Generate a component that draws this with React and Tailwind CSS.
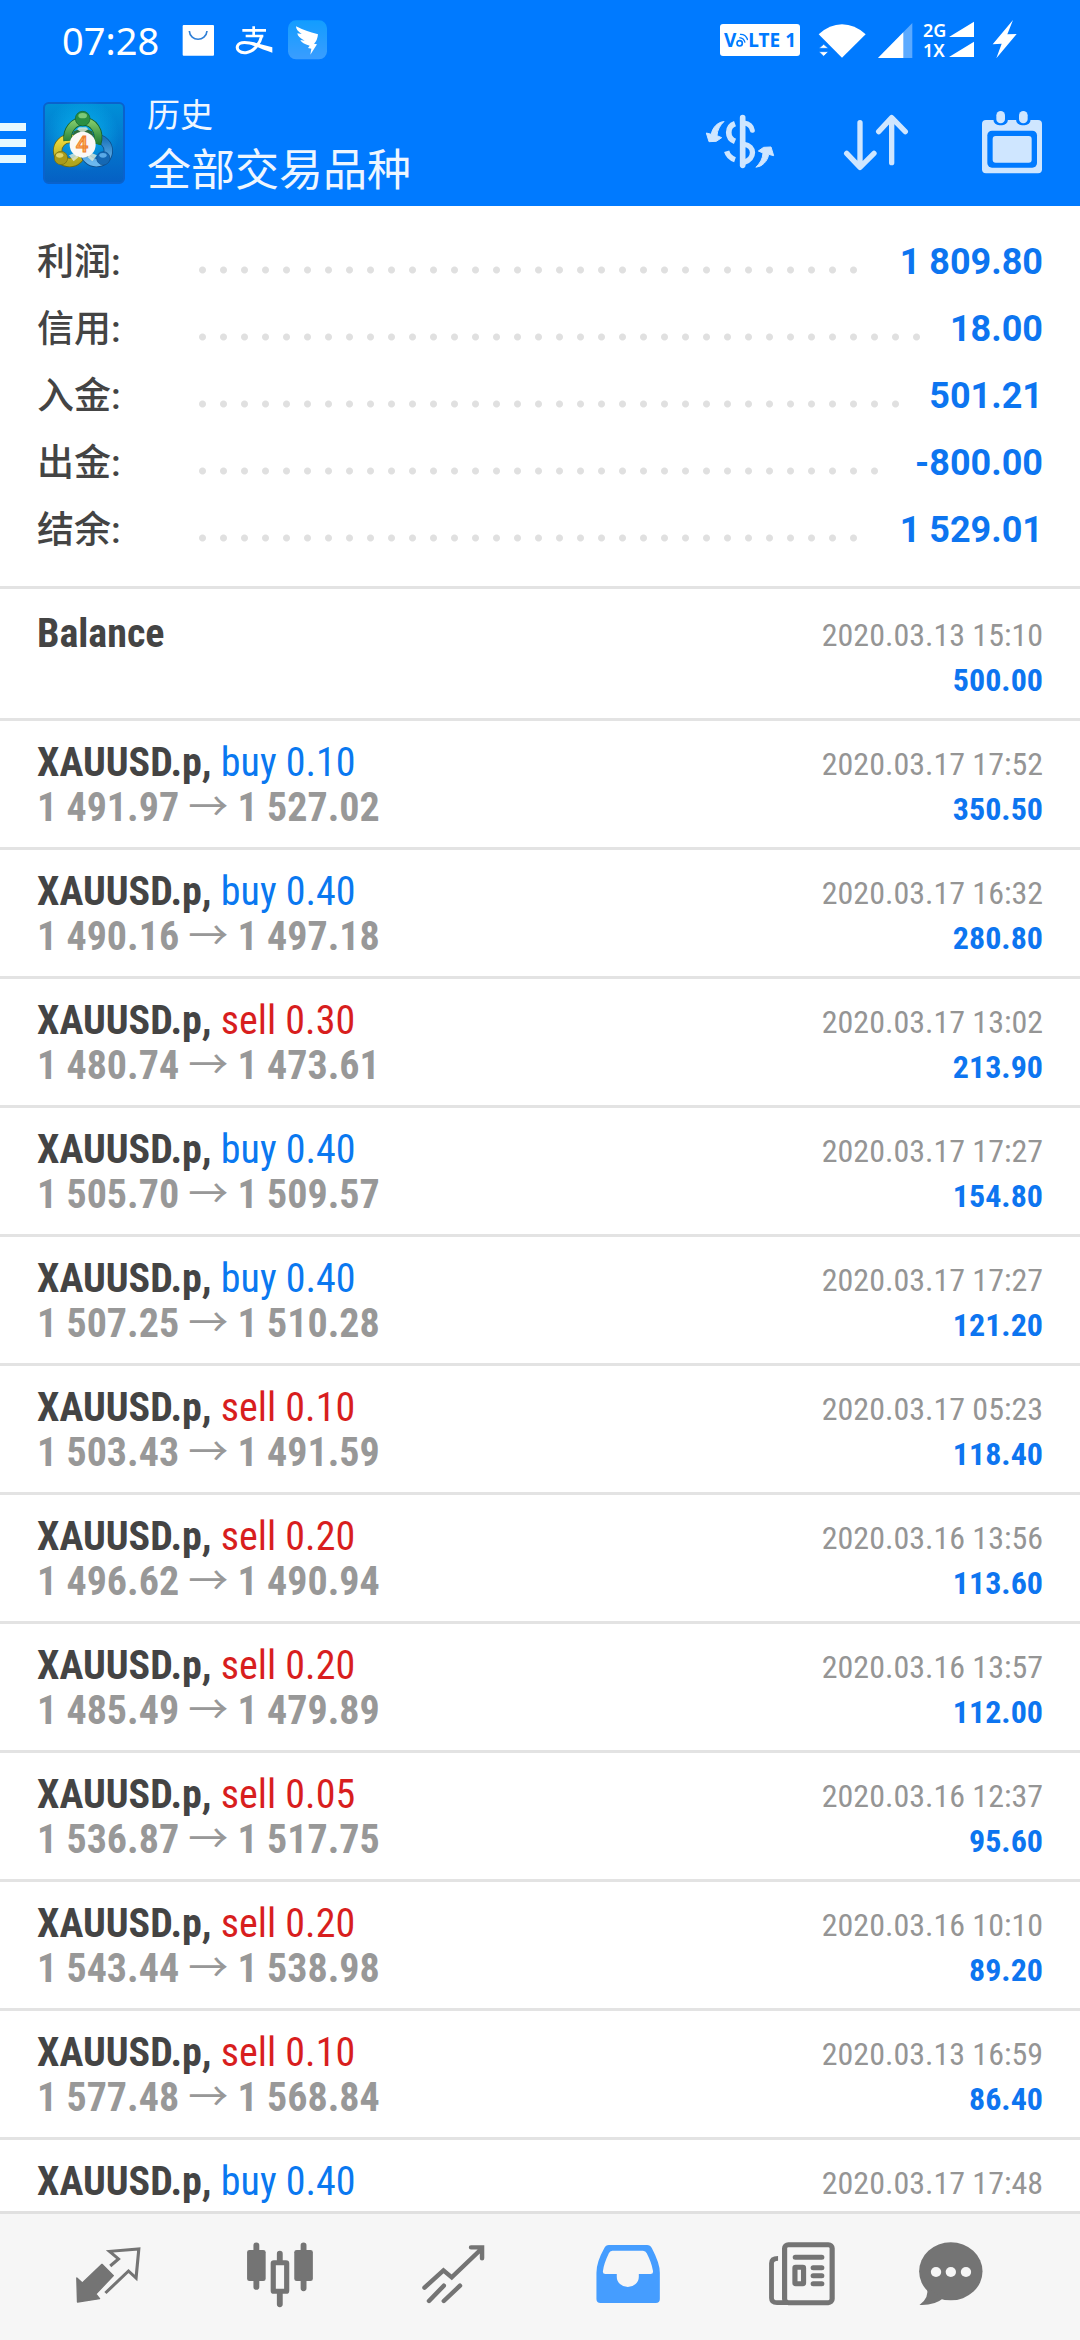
const summary = [
  { label: "利润:", value: "1 809.80" },
  { label: "信用:", value: "18.00" },
  { label: "入金:", value: "501.21" },
  { label: "出金:", value: "-800.00" },
  { label: "结余:", value: "1 529.01" },
];

const deals = [
  { side: "buy", lots: "0.10", open: "1 491.97", close: "1 527.02", time: "2020.03.17 17:52", profit: "350.50" },
  { side: "buy", lots: "0.40", open: "1 490.16", close: "1 497.18", time: "2020.03.17 16:32", profit: "280.80" },
  { side: "sell", lots: "0.30", open: "1 480.74", close: "1 473.61", time: "2020.03.17 13:02", profit: "213.90" },
  { side: "buy", lots: "0.40", open: "1 505.70", close: "1 509.57", time: "2020.03.17 17:27", profit: "154.80" },
  { side: "buy", lots: "0.40", open: "1 507.25", close: "1 510.28", time: "2020.03.17 17:27", profit: "121.20" },
  { side: "sell", lots: "0.10", open: "1 503.43", close: "1 491.59", time: "2020.03.17 05:23", profit: "118.40" },
  { side: "sell", lots: "0.20", open: "1 496.62", close: "1 490.94", time: "2020.03.16 13:56", profit: "113.60" },
  { side: "sell", lots: "0.20", open: "1 485.49", close: "1 479.89", time: "2020.03.16 13:57", profit: "112.00" },
  { side: "sell", lots: "0.05", open: "1 536.87", close: "1 517.75", time: "2020.03.16 12:37", profit: "95.60" },
  { side: "sell", lots: "0.20", open: "1 543.44", close: "1 538.98", time: "2020.03.16 10:10", profit: "89.20" },
  { side: "sell", lots: "0.10", open: "1 577.48", close: "1 568.84", time: "2020.03.13 16:59", profit: "86.40" },
  { side: "buy", lots: "0.40", open: "1 522.80", close: "1 524.80", time: "2020.03.17 17:48", profit: "80.00" },
];

function StatusBar() {
  return (
    <div className="flex h-20 items-center pl-[62px] pr-[63px] text-white">
      <span className="w-[120px] font-['Noto_Sans'] text-[38px] leading-10">07:28</span>
      <svg className="h-10 w-[33px]" viewBox="6 15 99 120" aria-hidden="true">
        <rect x="8" y="30" width="94" height="92" rx="3" fill="#fff" />
        <path d="M28 48C30 81 78 81 81 48" fill="none" stroke="#2f7fd6" strokeWidth="5" />
      </svg>
      <svg className="ml-5 h-10 w-[38px]" viewBox="165 15 114 120" aria-hidden="true">
        <g fill="none" stroke="#fff">
          <path d="M187 46H258M197 63H250M221 34V64" strokeWidth="8" />
          <path d="M245 63C240 86 222 110 198 113C180 115 168 104 173 92C180 78 205 82 228 89" strokeWidth="9" />
        </g>
        <path d="M214 80L277 97V113C255 106 236 98 214 89Z" fill="#fff" />
      </svg>
      <svg className="ml-[15px] h-10 w-[39px]" viewBox="324 15 117 120" aria-hidden="true">
        <defs>
          <linearGradient id="wing" x1="0" y1="0" x2="0" y2="1">
            <stop offset="0" stopColor="#129dff" />
            <stop offset="1" stopColor="#3a9dff" />
          </linearGradient>
        </defs>
        <rect x="324" y="16" width="117" height="117" rx="24" fill="url(#wing)" />
        <path d="M348 34Q375 48 414 58Q412 78 402 86L411 88L391 119L394 101L384 99L389 92Q366 86 361 75L374 77Q353 67 352 55L365 57Q348 46 348 34Z" fill="#fff" />
      </svg>
      <div className="ml-auto flex items-center">
        <div className="flex h-8 w-20 items-center justify-center rounded-[3px] bg-white font-['Noto_Sans'] text-[19px] leading-8 font-bold text-[#007aff]">
          <span>V</span>
          <svg className="h-5 w-[12px]" viewBox="74 52 36 60" aria-hidden="true">
            <g fill="none" stroke="#007aff" strokeWidth="5">
              <circle cx="85" cy="92" r="8" />
              <path d="M84 75Q98 76 101 90M86 65Q104 64 109 82" strokeWidth="4" />
            </g>
          </svg>
          <span>LTE 1</span>
        </div>
        <svg className="ml-[18px] h-10 w-12" viewBox="310 15 144 120" fill="#fff" aria-hidden="true">
          <path d="M312 58Q345 28 382 28Q420 28 453 58L382 128Z" />
          <path d="M313 100L327 88L341 100ZM313 110L327 124L341 110Z" stroke="#007aff" strokeWidth="2" />
        </svg>
        <svg className="ml-3 h-10 w-[35px]" viewBox="489 15 105 120" aria-hidden="true">
          <path d="M489 129L592 24V129Z" fill="#5caaff" />
          <path d="M489 129L565 52V129Z" fill="#fff" />
        </svg>
        <div className="ml-[10px] w-[26px] font-['Noto_Sans'] text-[18px] leading-5 font-semibold">
          <div>2G</div>
          <div>1X</div>
        </div>
        <svg className="h-10 w-[26px]" viewBox="702 15 78 120" fill="#fff" aria-hidden="true">
          <path d="M702 66L777 20V66ZM702 126L777 80V126Z" />
        </svg>
        <svg className="ml-[17px] h-10 w-[25px]" viewBox="831 15 75 120" fill="#fff" aria-hidden="true">
          <path d="M894 15L833 88L860 86L844 130L905 57L877 58Z" />
        </svg>
      </div>
    </div>
  );
}

function AppLogo() {
  return (
    <svg className="h-[82px] w-[82px]" viewBox="12 12 246 246" aria-hidden="true">
      <defs>
        <linearGradient id="tile" x1="0" y1="0" x2="0" y2="1">
          <stop offset="0" stopColor="#0090d8" />
          <stop offset="1" stopColor="#0560c4" />
        </linearGradient>
        <radialGradient id="glow">
          <stop offset="0" stopColor="#08b4ee" />
          <stop offset="1" stopColor="#08b4ee" stopOpacity="0" />
        </radialGradient>
        <linearGradient id="green" x1="0" y1="0" x2="0" y2="1">
          <stop offset="0" stopColor="#7fc96a" />
          <stop offset="1" stopColor="#1d7a34" />
        </linearGradient>
        <linearGradient id="yellow" x1="0" y1="0" x2="0" y2="1">
          <stop offset="0" stopColor="#f0dc3c" />
          <stop offset="1" stopColor="#b0a51c" />
        </linearGradient>
        <linearGradient id="blue" x1="0" y1="0" x2="0" y2="1">
          <stop offset="0" stopColor="#1c74bc" />
          <stop offset="1" stopColor="#6cb8ee" />
        </linearGradient>
      </defs>
      <rect x="15" y="15" width="240" height="240" rx="14" fill="url(#tile)" stroke="#0a62cc" strokeWidth="6" />
      <circle cx="130" cy="110" r="110" fill="url(#glow)" />
      <g fill="none">
        <circle cx="92" cy="158" r="36" stroke="#6b6a14" strokeWidth="28" />
        <circle cx="92" cy="158" r="36" stroke="url(#yellow)" strokeWidth="23" />
        <circle cx="172" cy="158" r="36" stroke="#0f4f8c" strokeWidth="28" />
        <circle cx="172" cy="158" r="36" stroke="url(#blue)" strokeWidth="23" />
        <path d="M86 128C82 96 104 70 132 70C162 70 186 98 174 138" stroke="#14602c" strokeWidth="26" />
        <path d="M86 128C82 96 104 70 132 70C162 70 186 98 174 138" stroke="url(#green)" strokeWidth="21" />
      </g>
      <path d="M104 100Q132 84 160 100L168 142L146 176H116L94 146Z" fill="#2d6b3a" />
      <path d="M90 172L108 164L118 178L104 190ZM174 172L156 164L146 178L160 190ZM114 94L130 106L148 94L142 88H120Z" fill="#dfead8" opacity="0.8" />
      <circle cx="131" cy="62" r="22" fill="#2a8f42" stroke="#14602c" strokeWidth="2" />
      <ellipse cx="131" cy="53" rx="13" ry="8" fill="#7cc878" />
      <circle cx="66" cy="180" r="20" fill="#a89a1c" stroke="#6b6a14" strokeWidth="2" />
      <ellipse cx="62" cy="172" rx="11" ry="7" fill="#e0d468" />
      <circle cx="193" cy="181" r="20" fill="#1568b4" stroke="#0f4f8c" strokeWidth="2" />
      <ellipse cx="192" cy="172" rx="11" ry="7" fill="#5aa9e6" />
      <circle cx="131" cy="140" r="39" fill="#fbf8f6" />
      <text x="129" y="162" textAnchor="middle" className="font-['Roboto'] text-[66px] font-medium" fill="#ffb45c" stroke="#ee7f30" strokeWidth="3">4</text>
    </svg>
  );
}

function TitleBar() {
  return (
    <div className="flex h-[126px] items-center pr-8 text-[#eef6ff]">
      <button type="button" aria-label="菜单" className="flex h-20 w-[43px] flex-col justify-center gap-2">
        <span className="h-2 w-[26px] bg-[#e6f8ff]" />
        <span className="h-2 w-[26px] bg-[#e6f8ff]" />
        <span className="h-2 w-[26px] bg-[#e6f8ff]" />
      </button>
      <AppLogo />
      <h1 className="ml-[22px] flex flex-col pb-[2px] font-['Noto_Sans_CJK_SC',sans-serif] font-normal">
        <span className="text-[33px] leading-[50px]">历史</span>
        <span className="text-[44px] leading-[58px]">全部交易品种</span>
      </h1>
      <div className="ml-auto flex gap-16">
        <button type="button" aria-label="交易品种">
          <svg className="h-[72px] w-[72px]" viewBox="12 6 216 216" fill="none" stroke="#cfe6ff" strokeLinecap="round" aria-hidden="true">
            <path d="M128 38V181" strokeWidth="17" />
            <path d="M132 54C147 56 155 64 157 76" strokeWidth="15" />
            <path d="M132 118C166 122 166 162 132 172" strokeWidth="16" />
            <path d="M105 56C80 65 80 99 105 109" strokeWidth="17" strokeLinecap="butt" />
            <path d="M80 139C84 153 93 160 105 164" strokeWidth="16" strokeLinecap="butt" />
            <g fill="#cfe6ff" strokeWidth="3" strokeLinejoin="round">
              <path d="M71 50C56 50 37 66 34 88L19 84L27 110L49 109L65 98L51 92C52 74 60 62 71 50Z" />
              <path d="M71 50C56 50 37 66 34 88L19 84L27 110L49 109L65 98L51 92C52 74 60 62 71 50Z" transform="rotate(180 120 118)" />
            </g>
          </svg>
        </button>
        <button type="button" aria-label="排序">
          <svg className="h-[72px] w-[72px]" viewBox="480 321 216 216" fill="none" stroke="#cfe6ff" strokeWidth="16" strokeLinecap="round" strokeLinejoin="round" aria-hidden="true">
            <path d="M540 368V500M500 460L540 502L582 460M635 488V354M596 395L635 353L676 395" />
          </svg>
        </button>
        <button type="button" aria-label="日期">
          <svg className="h-[72px] w-[72px]" viewBox="888 321 216 216" aria-hidden="true">
            <rect x="906" y="360" width="180" height="160" rx="12" fill="#cfe6ff" />
            <rect x="940" y="330" width="44" height="46" rx="18" fill="#007aff" />
            <rect x="1008" y="330" width="44" height="46" rx="18" fill="#007aff" />
            <rect x="949" y="333" width="26" height="37" rx="13" fill="#cfe6ff" />
            <rect x="1017" y="333" width="26" height="37" rx="13" fill="#cfe6ff" />
            <rect x="922" y="392" width="149" height="111" rx="14" fill="#007aff" />
            <rect x="938" y="408" width="117" height="80" rx="9" fill="#cfe6ff" />
          </svg>
        </button>
      </div>
    </div>
  );
}

function Summary() {
  return (
    <dl className="border-b-3 border-[#e3e3e3] px-[37px] pt-[23px] pb-[22px] font-['Roboto','Noto_Sans_CJK_SC',sans-serif]">
      {summary.map((row) => (
        <div key={row.label} className="flex h-[67px] items-center">
          <dt className="w-[155px] text-[37px] leading-[67px] font-medium text-[#444444]">{row.label}</dt>
          <dd className="flex flex-1 items-center">
            <span className="mr-[29px] h-[67px] flex-1 bg-[radial-gradient(circle,#e0e0e0_3px,transparent_4px)] bg-[length:21px_8px] bg-[position:0_37px] bg-repeat-x" />
            <span className="text-[36px] leading-[67px] font-bold text-[#0d75f0]">{row.value}</span>
          </dd>
        </div>
      ))}
    </dl>
  );
}

function HistoryRow({ title, side, lots, open, close, time, profit }) {
  return (
    <li className="flex justify-between border-b-3 border-[#e3e3e3] px-[37px] pt-[19px] pb-[17px]">
      <div className="text-[40px] leading-[45px]">
        <div>
          <span className="font-bold text-[#444444]">{title}</span>
          {side && (
            <span className={side === "buy" ? "text-[#0a78f0]" : "text-[#d81e1e]"}>
              {" "}
              {side} {lots}
            </span>
          )}
        </div>
        {open && (
          <div className="h-[45px] font-bold text-[#989898]">
            {open} <span className="font-normal">→</span> {close}
          </div>
        )}
      </div>
      <div className="-mb-[2px] pt-[2px] text-right text-[32px] leading-[45px]">
        <time className="block text-[#959595]">{time}</time>
        <div className="font-bold text-[#0d75f0]">{profit}</div>
      </div>
    </li>
  );
}

function TabIcon({ x, children, ...rest }) {
  return (
    <svg className="h-[72px] w-[72px]" viewBox={`${x} 333 209 216`} preserveAspectRatio="none" aria-hidden="true" {...rest}>
      {children}
    </svg>
  );
}

function TabBar() {
  const tab = "flex flex-1 items-center justify-center";
  return (
    <nav className="flex h-[129px] shrink-0 border-t-3 border-[#e0e0e0] bg-[#f6f6f6] pr-[66px] pl-[21px]">
      <button type="button" aria-label="行情" className={tab}>
        <TabIcon x={208}>
          <path d="M222 444L238 459L295 403L328 437L277 492L288 506L224 516Z" fill="#747474" stroke="#747474" strokeWidth="4" strokeLinejoin="round" />
          <path d="M319 408L343 387L317 364L402 357L394 444L372 423L305 489" fill="none" stroke="#747474" strokeWidth="9" />
        </TabIcon>
      </button>
      <button type="button" aria-label="图表" className={tab}>
        <TabIcon x={712} fill="#747474" stroke="#747474" strokeLinecap="round">
          <path d="M745 346V471M882 346V475M813 371V395M813 490V523" strokeWidth="17" />
          <rect x="718" y="360" width="54" height="93" rx="7" stroke="none" />
          <rect x="855" y="360" width="54" height="93" rx="7" stroke="none" />
          <rect x="794" y="398" width="39" height="86" rx="2" fill="#f6f6f6" strokeWidth="15" />
        </TabIcon>
      </button>
      <button type="button" aria-label="交易" className={tab}>
        <TabIcon x={1216} fill="none" stroke="#747474" strokeWidth="13" strokeLinecap="round">
          <path d="M1232 473L1287 421L1311 442L1397 357M1367 352H1399V385M1288 467L1245 513M1335 467L1288 513" />
        </TabIcon>
      </button>
      <button type="button" aria-label="历史" aria-current="page" className={tab}>
        <TabIcon x={152}>
          <path fill="#459dff" fillRule="evenodd" d="M198 345H309Q318 345 323 355Q346 400 346 428V507Q346 519 334 519H174Q162 519 162 507V428Q162 396 185 354Q189 345 198 345ZM208 362Q201 362 198 370Q184 400 181 422Q179 432 188 432H221V440A32 31 0 0 0 285 440V432H319Q328 432 326 422Q322 398 308 370Q305 362 297 362Z" />
        </TabIcon>
      </button>
      <button type="button" aria-label="新闻" className={tab}>
        <TabIcon x={656} fill="none" stroke="#747474" strokeWidth="15">
          <rect x="710" y="344" width="138" height="174" rx="11" />
          <path d="M691 385C678 385 672 390 672 400V504Q672 518 688 518H720" strokeWidth="14" />
          <path d="M741 382H818M793 413H818M793 437H818M793 461H818" strokeLinecap="round" />
          <rect x="740" y="412" width="25" height="49" rx="2" />
        </TabIcon>
      </button>
      <button type="button" aria-label="信箱" className="flex w-[125px] items-center justify-center">
        <TabIcon x={1089} fill="#747474">
          <ellipse cx="1193" cy="424" rx="92" ry="87" />
          <path d="M1123 470Q1132 502 1102 525Q1146 527 1172 504Z" />
          <g fill="#f6f6f6">
            <circle cx="1150" cy="426" r="15" />
            <circle cx="1193" cy="426" r="15" />
            <circle cx="1237" cy="426" r="15" />
          </g>
        </TabIcon>
      </button>
    </nav>
  );
}

export default function App() {
  return (
    <div className="flex h-screen flex-col overflow-hidden bg-white">
      <header className="shrink-0 bg-[#007aff]">
        <StatusBar />
        <TitleBar />
      </header>
      <main className="min-h-0 flex-1 overflow-hidden">
        <Summary />
        <ul className="pt-[3px] font-['Roboto_Condensed','Noto_Sans_CJK_SC',sans-serif]">
          <HistoryRow title="Balance" time="2020.03.13 15:10" profit="500.00" />
          {deals.map((deal, i) => (
            <HistoryRow key={i} title="XAUUSD.p," {...deal} />
          ))}
        </ul>
      </main>
      <TabBar />
    </div>
  );
}
